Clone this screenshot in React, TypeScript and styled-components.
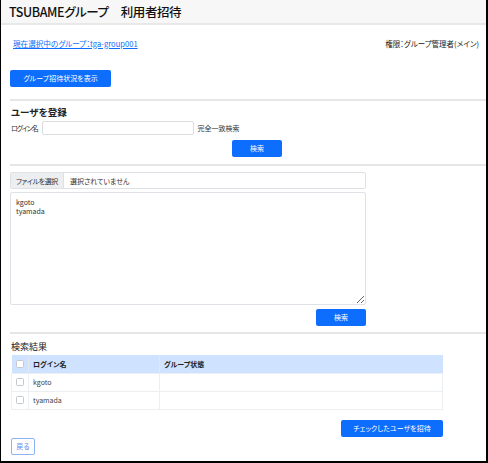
import styled, { createGlobalStyle } from "styled-components";

const GlobalStyle = createGlobalStyle`
  html, body {
    margin: 0;
    padding: 0;
    background: #ffffff;
  }
  body {
    font-family: "Noto Sans CJK JP", "Noto Sans", sans-serif;
    font-feature-settings: "palt";
    color: #212529;
  }
`;

const users = ["kgoto", "tyamada"];

function App() {
  return (
    <Frame>
      <GlobalStyle />
      <Header>
        <Title>TSUBAMEグループ　利用者招待</Title>
      </Header>
      <Content>
        <GroupRow>
          <GroupLink href="#">現在選択中のグループ：tga-group001</GroupLink>
          <RoleText>権限：グループ管理者(メイン)</RoleText>
        </GroupRow>
        <Button $width={101}>グループ招待状況を表示</Button>
        <Divider $top={12} />

        <Section>
          <Heading>ユーザを登録</Heading>
          <FieldRow>
            <Label $tight>ログイン名</Label>
            <TextInput />
            <Label>完全一致検索</Label>
          </FieldRow>
          <CenterRow>
            <Button $width={50}>検索</Button>
          </CenterRow>
        </Section>
        <Divider $top={7} />

        <FileBlock>
          <FileInput>
            <FileButton>ファイルを選択</FileButton>
            <FileName>選択されていません</FileName>
          </FileInput>
          <TextArea defaultValue={"kgoto\ntyamada"} />
          <RightRow>
            <Button $width={50}>検索</Button>
          </RightRow>
        </FileBlock>
        <Divider $top={6} />

        <ResultHeading>検索結果</ResultHeading>
        <Table>
          <thead>
            <tr>
              <HeadCell $width={17}>
                <Check />
              </HeadCell>
              <HeadCell $width={131}>ログイン名</HeadCell>
              <HeadCell>グループ状態</HeadCell>
            </tr>
          </thead>
          <tbody>
            {users.map((u) => (
              <tr key={u}>
                <Cell>
                  <Check />
                </Cell>
                <Cell>{u}</Cell>
                <Cell />
              </tr>
            ))}
          </tbody>
        </Table>
        <InviteRow>
          <Button $width={102}>チェックしたユーザを招待</Button>
        </InviteRow>
        <BackButton>戻る</BackButton>
      </Content>
    </Frame>
  );
}

const Frame = styled.div`
  box-sizing: border-box;
  width: 488px;
  height: 463px;
  border-left: 1px solid #000;
  border-right: 2px solid #000;
  border-bottom: 2px solid #000;
  overflow: hidden;
`;

const Header = styled.div`
  height: 23px;
  background: #f7f7f7;
  border-bottom: 2px solid #e8e8e8;
  display: flex;
  align-items: center;
  padding-left: 8px;
`;

const Title = styled.h1`
  margin: 0;
  font-size: 12.5px;
  font-weight: 500;
  color: #111;
  letter-spacing: -0.4px;
`;

const Content = styled.div`
  padding: 0 0 0 9px;
  display: flex;
  flex-direction: column;
  align-items: flex-start;
`;

const GroupRow = styled.div`
  align-self: stretch;
  display: flex;
  justify-content: space-between;
  align-items: center;
  padding: 11px 7px 0 3px;
  height: 14px;
  margin-bottom: 20px;
`;

const GroupLink = styled.a`
  font-size: 7.6px;
  color: #0d6efd;
  text-decoration: underline;
`;

const RoleText = styled.span`
  font-size: 7.5px;
  color: #222;
  margin-top: 1px;
`;

const Button = styled.button<{ $width: number }>`
  width: ${({ $width }) => $width}px;
  height: 17px;
  padding: 0;
  border: none;
  border-radius: 2px;
  background: #0d6efd;
  color: #ffffff;
  font-family: inherit;
  font-feature-settings: "palt";
  font-size: 7px;
  line-height: 17px;
  cursor: pointer;
`;

const Divider = styled.hr<{ $top: number }>`
  align-self: stretch;
  margin: ${({ $top }) => $top}px 0 0 0;
  border: none;
  border-top: 2px solid #e6e6e6;
  height: 0;
`;

const Section = styled.div`
  align-self: stretch;
  display: flex;
  flex-direction: column;
  padding-top: 4px;
`;

const Heading = styled.h2`
  margin: 0 0 2px 1px;
  font-size: 9.5px;
  font-weight: 700;
  color: #222;
  line-height: 14px;
`;

const FieldRow = styled.div`
  display: flex;
  align-items: center;
  gap: 4px;
  padding-left: 1px;
`;

const Label = styled.span<{ $tight?: boolean }>`
  font-size: 7px;
  color: #333;
  letter-spacing: ${({ $tight }) => ($tight ? "-1.2px" : "0")};
`;

const TextInput = styled.input`
  box-sizing: border-box;
  width: 152px;
  height: 14px;
  border: 1px solid #dcdcdc;
  border-radius: 2px;
  padding: 0 3px;
  font-size: 7px;
`;

const CenterRow = styled.div`
  display: flex;
  padding-left: 222px;
  margin-top: 5px;
`;

const FileBlock = styled.div`
  display: flex;
  flex-direction: column;
  padding-top: 6px;
  width: 356px;
`;

const FileInput = styled.div`
  box-sizing: border-box;
  height: 17px;
  display: flex;
  align-items: stretch;
  border: 1px solid #dee2e6;
  border-radius: 2px;
  overflow: hidden;
`;

const FileButton = styled.span`
  display: flex;
  align-items: center;
  padding: 0 5px;
  background: #eceef0;
  border-right: 1px solid #dee2e6;
  font-size: 7px;
  color: #333;
  letter-spacing: -0.4px;
`;

const FileName = styled.span`
  display: flex;
  align-items: center;
  padding-left: 6px;
  font-size: 7px;
  color: #333;
`;

const TextArea = styled.textarea`
  box-sizing: border-box;
  margin-top: 3px;
  height: 113px;
  width: 100%;
  border: 1px solid #dee2e6;
  border-radius: 2px;
  padding: 5px 5px;
  font-family: inherit;
  font-feature-settings: "palt";
  font-size: 7px;
  line-height: 9px;
  color: #333;
`;

const RightRow = styled.div`
  display: flex;
  justify-content: flex-end;
  margin-top: 4px;
`;

const ResultHeading = styled.h3`
  margin: 6px 0 2px 1px;
  font-size: 9px;
  font-weight: 400;
  color: #222;
  line-height: 13px;
`;

const Table = styled.table`
  width: 432px;
  margin-left: 1px;
  border-collapse: collapse;
  font-size: 7px;
  color: #444;
`;

const HeadCell = styled.th<{ $width?: number }>`
  width: ${({ $width }) => ($width ? `${$width}px` : "auto")};
  height: 18px;
  padding: 0 0 0 4px;
  background: #cfe2ff;
  border-left: 1px solid #e3e8ef;
  text-align: left;
  font-weight: 700;
  color: #222;
  box-sizing: border-box;
  &:first-child {
    border-left: none;
  }
`;

const Cell = styled.td`
  height: 18px;
  padding: 0 0 0 4px;
  border: 1px solid #eceff2;
  box-sizing: border-box;
`;

const Check = styled.span`
  display: block;
  width: 6px;
  height: 6px;
  border: 1px solid #c4c8cc;
  border-radius: 1.5px;
  background: #fff;
`;

const InviteRow = styled.div`
  width: 433px;
  display: flex;
  justify-content: flex-end;
  margin-top: 10px;
`;

const BackButton = styled.button`
  margin-top: 1px;
  margin-left: 1px;
  width: 24px;
  height: 17px;
  padding: 0;
  border: 1px solid #8cb4f5;
  border-radius: 2px;
  background: #fff;
  color: #5b8def;
  font-family: inherit;
  font-feature-settings: "palt";
  font-size: 7px;
`;

export default App;
